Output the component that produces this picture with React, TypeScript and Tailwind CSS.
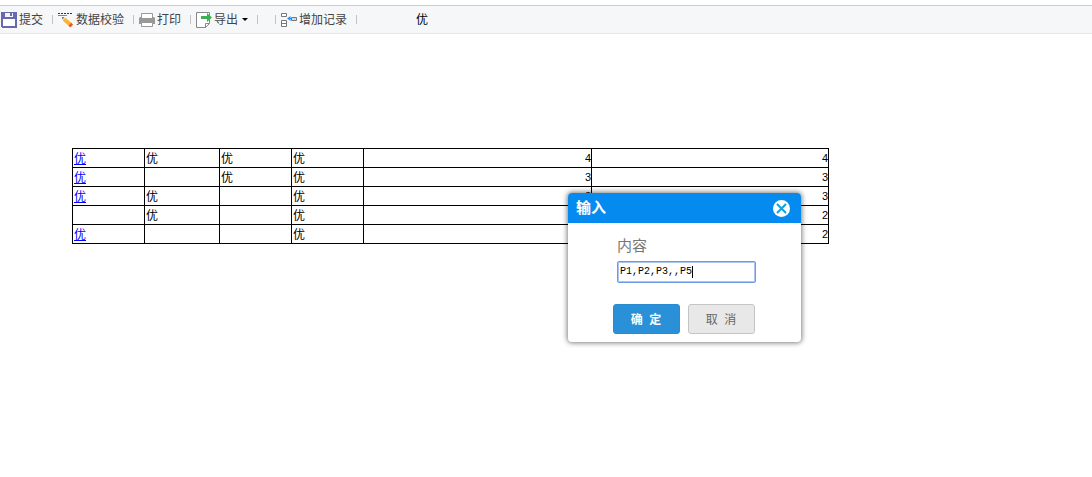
import type { ReactNode } from 'react';

const rows = [
  ['优', '优', '优', '优', '4', '4'],
  ['优', '', '优', '优', '3', '3'],
  ['优', '优', '', '优', '3', '3'],
  ['', '优', '', '优', '2', '2'],
  ['优', '', '', '优', '2', '2'],
];

function Tool({ icon, children }: { icon: ReactNode; children: ReactNode }) {
  return (
    <button type="button" className="flex items-center gap-0.5 whitespace-nowrap">
      {icon}
      {children}
    </button>
  );
}

function Separator() {
  return <span className="h-[9px] w-px shrink-0 bg-[#c4c4c4]" />;
}

const iconClass = 'size-4 shrink-0';

function SaveIcon() {
  return (
    <svg className={iconClass} viewBox="0 0 16 16" shapeRendering="crispEdges">
      <path d="M0 0h16v16H1l-1-1z" fill="#6868b0" />
      <path d="M2 7h12v7H2z" fill="#fff" />
      <path d="M4 1h8v4H4z" fill="#f4f4fb" />
      <path d="M9 1h2v3H9z" fill="#6868b0" />
    </svg>
  );
}

function CheckIcon() {
  return (
    <svg className={iconClass} viewBox="0 0 16 16">
      <path d="M0 1.500h14" stroke="#333" strokeDasharray="2 1" />
      <path d="M0 3.500h9" stroke="#3b94f5" />
      <path d="M4 5l4 .8L4.900 9z" fill="#ffd9a0" />
      <path d="M4 5l2.200.4L4.600 7.200z" fill="#555" />
      <path d="M6.200 7.200l6.300 5.600" stroke="#fcb42c" strokeWidth="4" />
      <path d="M11.800 12.200l2 1.800" stroke="#e8563a" strokeWidth="4" />
    </svg>
  );
}

function PrintIcon() {
  return (
    <svg className={iconClass} viewBox="0 0 16 16">
      <path d="M2.500 6V1.500h11V6" fill="#fff" stroke="#999" />
      <path d="M1 5h1v1h12V5h1l1 1v6H0V6z" fill="#999" />
      <path d="M2.500 10.500h11v4h-11z" fill="#fff" stroke="#999" />
    </svg>
  );
}

function ExportIcon() {
  return (
    <svg className={iconClass} viewBox="0 0 16 16">
      <path d="M.5.500h13v11l-4 4h-9z" fill="#fff" stroke="#888" />
      <path d="M9.500 15.500v-4h4" fill="none" stroke="#888" />
      <path d="M5 4h6V1l5 4.500-5 4.500V7H5z" fill="#3cb054" />
    </svg>
  );
}

function AddRecordIcon() {
  return (
    <svg className={iconClass} viewBox="0 0 16 16">
      <path d="M.5 1.500h5v3h-5zM.5 8.500h5v6h-5zM.5 11.500h5" fill="#fff" stroke="#777" />
      <path d="M6 6.500l3.500-2.500v2H10v1h-.5v2z" fill="#2d8cf0" />
      <path d="M10.500 5.500h5v3h-5z" fill="#b8e0ff" stroke="#777" />
    </svg>
  );
}

export default function App() {
  return (
    <div className="relative min-h-screen bg-white pt-[5px] font-['Liberation_Sans','Noto_Sans_CJK_SC',sans-serif] text-xs text-black">
      <header className="flex h-[29px] items-center border-t border-b border-t-[#cccccc] border-b-[#e8e8e8] bg-[#f6f7f9] pl-px text-[#444]">
        <Tool icon={<SaveIcon />}>提交</Tool>
        <div className="flex w-[15px] justify-end pr-[5px]"><Separator /></div>
        <Tool icon={<CheckIcon />}>数据校验</Tool>
        <div className="flex w-[15px] justify-end pr-[5px]"><Separator /></div>
        <Tool icon={<PrintIcon />}>打印</Tool>
        <div className="flex w-[15px] justify-end pr-[5px]"><Separator /></div>
        <Tool icon={<ExportIcon />}>
          导出
          <svg className="ml-0.5 h-[3px] w-[6px]" viewBox="0 0 6 3"><path d="M0 0h6L3 3z" fill="#000" /></svg>
        </Tool>
        <div className="flex w-[33px] justify-between pr-[5px] pl-[9px]"><Separator /><Separator /></div>
        <Tool icon={<AddRecordIcon />}>增加记录</Tool>
        <div className="flex w-[15px] justify-end pr-[5px]"><Separator /></div>
        <span className="ml-[54px] text-black">优</span>
      </header>

      <main className="px-[72px] pt-[114px]">
        <table className="w-[757px] table-fixed border-collapse border border-black">
          <colgroup>
            <col className="w-[72px]" />
            <col className="w-[75px]" />
            <col className="w-[72px]" />
            <col className="w-[72px]" />
            <col className="w-[228px]" />
            <col className="w-[237px]" />
          </colgroup>
          <tbody>
            {rows.map((row, r) => (
              <tr key={r} className="h-[19px]">
                {row.map((cell, c) => (
                  <td key={c} className={c > 3 ? 'border border-black p-0 text-right text-[11px] leading-4' : 'border border-black px-px pt-px pb-0 leading-4'}>
                    {c === 0 && cell ? <a href="#" className="text-[#0000ff] underline">{cell}</a> : cell}
                  </td>
                ))}
              </tr>
            ))}
          </tbody>
        </table>
      </main>

      <div role="dialog" aria-labelledby="dialog-title" className="absolute top-[193px] left-[568px] w-[233px] overflow-hidden rounded bg-white shadow-[0_0_5px_1px_rgba(0,0,0,0.5)]">
        <div className="flex h-[30px] items-center justify-between bg-[#058bef] pr-[11px] pl-2 text-white">
          <h2 id="dialog-title" className="text-[15px] font-bold">输入</h2>
          <button type="button" aria-label="关闭">
            <svg className="size-[17px]" viewBox="0 0 17 17">
              <circle cx="8.500" cy="8.500" r="8.500" fill="#fff" />
              <path d="M4 4l9 9m0-9l-9 9" stroke="#12a0e0" strokeWidth="2" />
            </svg>
          </button>
        </div>
        <form className="pb-2" onSubmit={(e) => e.preventDefault()}>
          <div className="flex flex-col pt-3 pr-[45px] pl-[49px]">
            <label htmlFor="content" className="text-[15px] leading-[22px] text-[#777]">内容</label>
            <div className="mt-1 flex h-[22px] items-center rounded-xs border border-[#6d9be6] bg-white pl-0.5 shadow-[inset_0_0_0_1px_#a9c4f2]">
              <input id="content" defaultValue="P1,P2,P3,,P5" size={12} className="w-[72px] bg-transparent font-['Liberation_Mono',monospace] text-[10px] leading-4 text-black outline-none" />
              <span className="h-3 w-px bg-black" />
            </div>
          </div>
          <div className="mt-[21px] flex justify-center gap-2 pr-0.5">
            <button type="submit" className="h-[30px] w-[67px] rounded-[3px] border border-[#2a8bd0] bg-[#2a91d8] pt-px font-bold whitespace-pre text-white">确  定</button>
            <button type="button" className="h-[30px] w-[67px] rounded-[3px] border border-[#c4c4c4] bg-[#e8e8e8] pt-px whitespace-pre text-[#666]">取  消</button>
          </div>
        </form>
      </div>
    </div>
  );
}
